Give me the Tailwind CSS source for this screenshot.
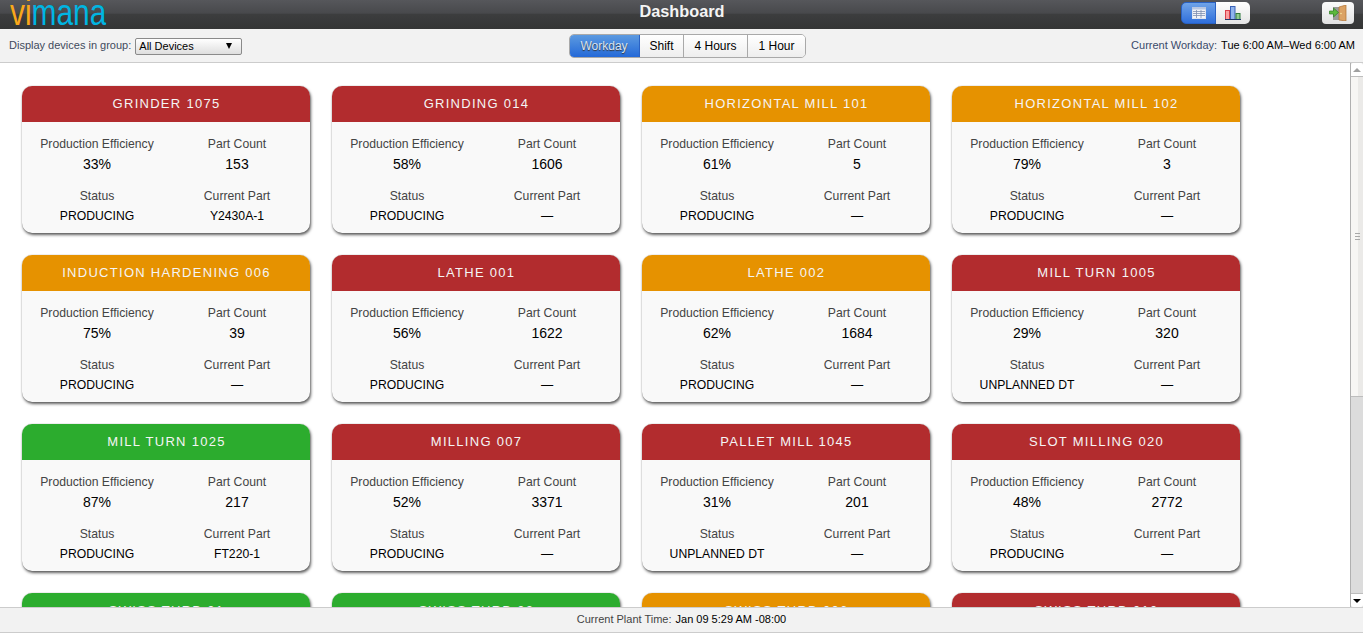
<!DOCTYPE html>
<html lang="en">
<head>
  <meta charset="UTF-8">
  <meta name="viewport" content="width=device-width, initial-scale=1.0">
  <title>Vimana - Dashboard</title>
  <script src="https://cdn.jsdelivr.net/npm/@tailwindcss/browser@4"></script>
</head>
<body class="h-[633px] w-[1363px] overflow-hidden flex flex-col bg-white font-['Liberation_Sans',Arial,sans-serif] text-xs text-black">
  <!-- top bar -->
  <header class="relative h-[29px] shrink-0 flex items-center justify-between bg-[linear-gradient(#56575b_0%,#48494c_45%,#3c3d3e_50%,#343535_100%)]">
    <div class="ml-[10px] w-[116px] h-[29px] overflow-hidden origin-left scale-x-[0.83] text-[36px] leading-[26px] whitespace-nowrap"><span class="text-[#f9a81a]">vi</span><span class="text-[#00b5e2]">mana</span></div>
    <h1 class="absolute left-px right-0 top-0 text-center text-[16.3px] leading-[22px] font-bold text-[#f4f4f4]">Dashboard</h1>
    <div class="flex items-center mr-[9px]">
      <div class="flex mr-[72px] h-[22px] w-[69px] -mt-[3px]">
        <button class="w-[35px] flex items-center justify-center rounded-l-[5px] border border-[#2a62c4] bg-[linear-gradient(#6fa3e8,#2f6fdc)]">
          <svg width="14" height="12" viewBox="0 0 14 12"><rect x="0.5" y="0.5" width="13" height="11" fill="#f2f4f8" stroke="#dfe4ee"/><rect x="0" y="0" width="14" height="2.5" fill="#b9c7e2"/><path d="M1 4.5h12M1 6.5h12M1 8.5h12M4.5 3v8M9 3v8" stroke="#7f8fb0" stroke-width="0.8"/></svg>
        </button>
        <button class="w-[34px] flex items-center justify-center rounded-r-[5px] bg-[linear-gradient(#ffffff,#e4e4e4)]">
          <svg width="16" height="14" viewBox="0 0 16 14"><rect x="0.5" y="4.5" width="4" height="9" fill="#fba0a0" stroke="#d9404c"/><rect x="5.5" y="0.5" width="4.5" height="13" fill="#8fb4ee" stroke="#3a62b8"/><rect x="11" y="7.5" width="4" height="6" fill="#8fcb8f" stroke="#2f7a3c"/><path d="M0 13.5h16" stroke="#1e3a6e"/></svg>
        </button>
      </div>
      <button class="w-[32px] h-[22px] -mt-[3px] flex items-center justify-center rounded-[4px] bg-[linear-gradient(#fbfbfb,#e2e2e2)]">
        <svg width="18" height="16" viewBox="0 0 18 16"><rect x="4" y="2" width="8" height="13" fill="#9a9a9a"/><path d="M10 2l7-2v16l-7-1z" fill="#dba264" stroke="#b0702f" stroke-width="0.7"/><circle cx="12" cy="8.5" r="0.8" fill="#f5e6a0"/><path d="M0.5 6h4V3l5 4.5-5 4.5V9h-4z" fill="#5cb83c" stroke="#2e7d22" stroke-width="0.7"/></svg>
      </button>
    </div>
  </header>

  <!-- filter bar -->
  <div class="relative h-[34px] shrink-0 flex items-center justify-between bg-[#f2f2f2] border-b border-[#cccccc] text-[11px]">
    <div class="flex items-center ml-[9px]">
      <span class="text-[#3f4a5c]">Display devices in group:</span>
      <div class="ml-[4px] mt-px w-[107px] h-[17px] flex items-center justify-between pl-[3px] pr-[9px] rounded-[2px] border border-[#8a8a8a] bg-[linear-gradient(#ffffff,#dedede)] text-black">
        <span>All Devices</span>
        <span class="w-0 h-0 border-l-[3px] border-r-[3px] border-t-[6px] border-l-transparent border-r-transparent border-t-black"></span>
      </div>
    </div>
    <div class="absolute left-[569px] top-[5px] flex h-[24px] text-xs rounded-[5px] overflow-hidden border border-[#a9a9a9]">
      <button class="w-[70px] pr-px border-r border-[#2a62c4] bg-[linear-gradient(#5c9ae0,#2469d8)] text-[#d8e4f4] [text-shadow:0_1px_1px_#333]">Workday</button>
      <button class="w-[44px] border-r border-[#a9a9a9] bg-[linear-gradient(#ffffff,#eeeeee)]">Shift</button>
      <button class="w-[64px] border-r border-[#a9a9a9] bg-[linear-gradient(#ffffff,#eeeeee)]">4 Hours</button>
      <button class="w-[57px] bg-[linear-gradient(#ffffff,#eeeeee)]">1 Hour</button>
    </div>
    <div class="mr-[8px]"><span class="text-[#3a4a6a]">Current Workday:</span><span class="ml-[4px]">Tue 6:00 AM–Wed 6:00 AM</span></div>
  </div>

  <!-- device cards -->
  <div class="flex-1 min-h-0 flex">
    <main class="flex-1 overflow-hidden pl-[22px] pt-[23px]">
      <div id="cards" class="grid grid-cols-[repeat(4,288px)] gap-x-[22px] gap-y-[22px]"></div>
    </main>
    <div class="w-[13px] shrink-0 flex flex-col border-l border-[#b0b0b0] bg-[#dcdcdc]">
      <div class="h-[14px] flex items-center justify-center rounded-t-[2px] bg-white border-b border-[#bdbdbd]"><span class="w-0 h-0 border-l-[4px] border-r-[4px] border-b-[4px] border-l-transparent border-r-transparent border-b-[#a0a0a0]"></span></div>
      <div class="h-[320px] flex flex-col items-center justify-center gap-[2px] bg-[linear-gradient(90deg,#f7f6f4_60%,#ebeae8_60%)] border-b border-[#bdbdbd]">
        <span class="w-[5px] h-px bg-[#a8a8a8]"></span><span class="w-[5px] h-px bg-[#a8a8a8]"></span><span class="w-[5px] h-px bg-[#a8a8a8]"></span>
      </div>
      <div class="flex-1"></div>
      <div class="h-[14px] flex items-center justify-center rounded-b-[2px] bg-white border-t border-[#bdbdbd]"><span class="w-0 h-0 border-l-[4px] border-r-[4px] border-t-[4px] border-l-transparent border-r-transparent border-t-black"></span></div>
    </div>
  </div>

  <!-- footer -->
  <footer class="h-[26px] shrink-0 flex items-center justify-center pb-[2px] bg-[#f2f2f2] border-y border-[#cccccc] text-[11px]">
    <span class="text-[#444]">Current Plant Time:</span><span class="ml-[4px]">Jan 09 5:29 AM -08:00</span>
  </footer>

  <script>
    const headerColors = {
      red: 'bg-[#b22c2e]',
      orange: 'bg-[#e69200]',
      green: 'bg-[#2cac2e]'
    };

    const devices = [
      ['GRINDER 1075', 'red', '33%', '153', 'PRODUCING', 'Y2430A-1'],
      ['GRINDING 014', 'red', '58%', '1606', 'PRODUCING', '—'],
      ['HORIZONTAL MILL 101', 'orange', '61%', '5', 'PRODUCING', '—'],
      ['HORIZONTAL MILL 102', 'orange', '79%', '3', 'PRODUCING', '—'],
      ['INDUCTION HARDENING 006', 'orange', '75%', '39', 'PRODUCING', '—'],
      ['LATHE 001', 'red', '56%', '1622', 'PRODUCING', '—'],
      ['LATHE 002', 'orange', '62%', '1684', 'PRODUCING', '—'],
      ['MILL TURN 1005', 'red', '29%', '320', 'UNPLANNED DT', '—'],
      ['MILL TURN 1025', 'green', '87%', '217', 'PRODUCING', 'FT220-1'],
      ['MILLING 007', 'red', '52%', '3371', 'PRODUCING', '—'],
      ['PALLET MILL 1045', 'red', '31%', '201', 'UNPLANNED DT', '—'],
      ['SLOT MILLING 020', 'red', '48%', '2772', 'PRODUCING', '—'],
      ['SWISS TURB 01', 'green', '80%', '110', 'PRODUCING', '—'],
      ['SWISS TURB 02', 'green', '85%', '96', 'PRODUCING', '—'],
      ['SWISS TURB 006', 'orange', '70%', '88', 'PRODUCING', '—'],
      ['SWISS TURB 010', 'red', '40%', '74', 'PRODUCING', '—']
    ];

    document.getElementById('cards').innerHTML = devices.map(([name, color, eff, count, status, part]) => `
      <article class="h-[147px] rounded-[10px] bg-[#f9f9f9] shadow-[0_0_1px_rgba(0,0,0,0.45),1px_2px_3px_rgba(0,0,0,0.62)] overflow-hidden">
        <h2 class="h-[36px] flex items-center justify-center pl-px ${headerColors[color]} text-[13px] tracking-[1.28px] text-[#f5f5f5]">${name}</h2>
        <div class="grid grid-cols-[140px_140px] pl-[5px] text-center text-[12.2px]">
          <div class="pt-[14px] text-[#444]">Production Efficiency</div>
          <div class="pt-[14px] text-[#444]">Part Count</div>
          <div class="pt-[4px] text-sm leading-[16px]">${eff}</div>
          <div class="pt-[4px] text-sm leading-[16px]">${count}</div>
          <div class="pt-[16px] text-[#444]">Status</div>
          <div class="pt-[16px] text-[#444]">Current Part</div>
          <div class="pt-[3px]">${status}</div>
          <div class="pt-[3px]">${part}</div>
        </div>
      </article>`).join('');
  </script>
</body>
</html>
